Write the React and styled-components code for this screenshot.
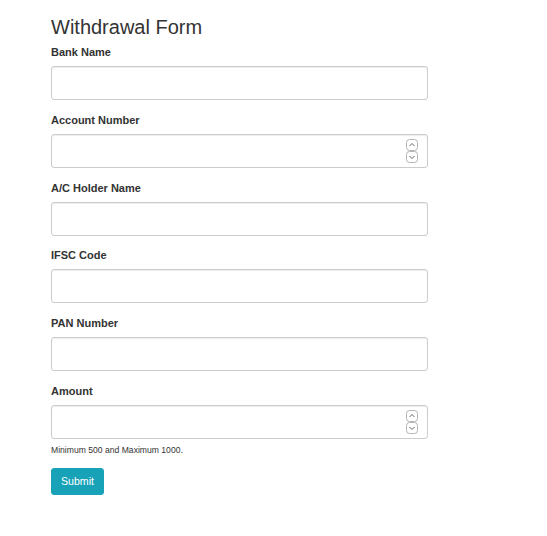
import React from 'react';
import styled, { createGlobalStyle } from 'styled-components';

const Global = createGlobalStyle`
  body {
    margin: 0;
    background: #fff;
    font-family: "Liberation Sans", Arial, Helvetica, sans-serif;
    color: #333;
  }
`;

const Page = styled.div`
  padding: 15px 0 40px 51px;
  width: 377px;
`;

const Title = styled.h2`
  margin: 0 0 5px;
  font-size: 20px;
  line-height: 24px;
  font-weight: 400;
  color: #333;
`;

const Group = styled.div`
  margin-bottom: ${(p) => (p.tight ? '0' : '11.8px')};
`;

const Label = styled.label`
  display: block;
  font-size: 11px;
  line-height: 16px;
  font-weight: 700;
  margin-bottom: 6px;
`;

const Field = styled.div`
  position: relative;
`;

const Input = styled.input`
  display: block;
  box-sizing: border-box;
  width: 100%;
  height: 34px;
  padding: 6px 12px;
  font-family: inherit;
  font-size: 12px;
  color: #555;
  background: #fff;
  border: 1px solid #ccc;
  border-radius: 3px;
  box-shadow: inset 0 1px 1px rgba(0, 0, 0, 0.075);
  outline: none;
  -moz-appearance: textfield;
  &::-webkit-inner-spin-button,
  &::-webkit-outer-spin-button {
    -webkit-appearance: none;
    margin: 0;
  }
`;

const Spin = styled.svg`
  position: absolute;
  right: 10px;
  top: 5px;
  width: 12px;
  height: 26px;
  pointer-events: none;
`;

const Spinner = () => (
  <Spin viewBox="0 0 12 26">
    <rect x="0.5" y="0.5" width="11" height="11" rx="3" fill="#fff" stroke="#b4b4b4" />
    <rect x="0.5" y="12.5" width="11" height="11" rx="3" fill="#fff" stroke="#b4b4b4" />
    <path d="M3.5 7 L6 4.5 L8.5 7" fill="none" stroke="#666" strokeWidth="1" />
    <path d="M3.5 17 L6 19.5 L8.5 17" fill="none" stroke="#666" strokeWidth="1" />
  </Spin>
);

const Help = styled.div`
  margin-top: 5px;
  font-size: 8.6px;
  line-height: 12px;
  color: #333;
`;

const Button = styled.button`
  display: block;
  margin-top: 12px;
  height: 27px;
  padding: 0 9px;
  font-family: inherit;
  font-size: 10.6px;
  color: #fff;
  background: #17a2b8;
  border: 1px solid #17a2b8;
  border-radius: 3px;
  cursor: pointer;
`;

const fields = [
  { label: 'Bank Name', type: 'text' },
  { label: 'Account Number', type: 'number' },
  { label: 'A/C Holder Name', type: 'text' },
  { label: 'IFSC Code', type: 'text' },
  { label: 'PAN Number', type: 'text' },
];

const Control = ({ type }) => (
  <Field>
    <Input type={type} />
    {type === 'number' && <Spinner />}
  </Field>
);

export default function App() {
  return (
    <>
      <Global />
      <Page>
        <Title>Withdrawal Form</Title>
        <form onSubmit={(e) => e.preventDefault()}>
          {fields.map((f) => (
            <Group key={f.label}>
              <Label>{f.label}</Label>
              <Control type={f.type} />
            </Group>
          ))}
          <Group tight>
            <Label>Amount</Label>
            <Control type="number" />
            <Help>Minimum 500 and Maximum 1000.</Help>
          </Group>
          <Button type="submit">Submit</Button>
        </form>
      </Page>
    </>
  );
}
